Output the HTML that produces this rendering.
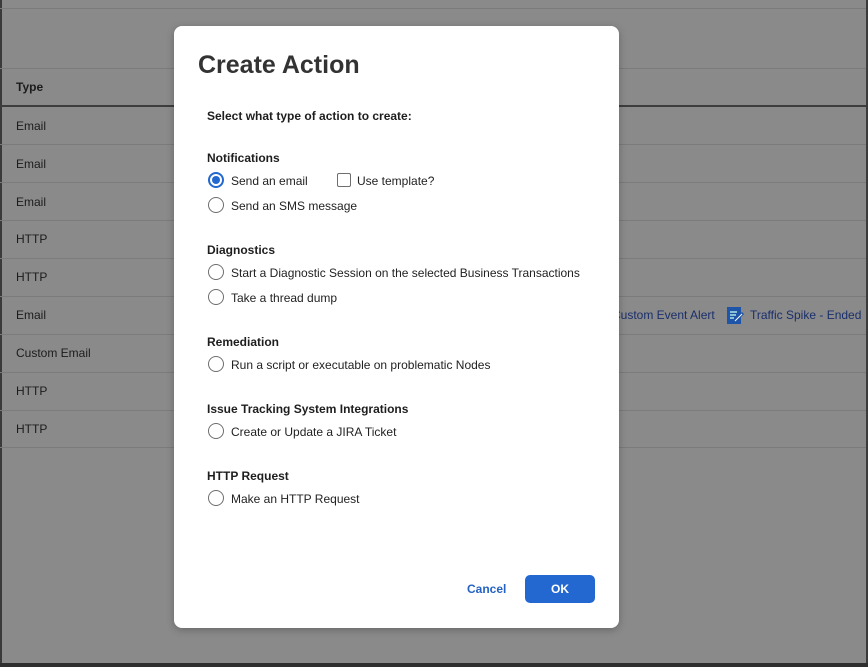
<!DOCTYPE html>
<html><head><style>
body{margin:0;width:868px;height:667px;background:#8a8a8a;position:relative;overflow:hidden;font-family:"Liberation Sans",Arial,sans-serif;}
.bl{position:absolute;left:0;width:866px;height:1px;background:#7b7b7b}
.t{position:absolute;left:16px;font-size:12px;color:#1c1c1c}
.modal{position:absolute;left:174px;top:26px;width:445px;height:602px;background:#fff;border-radius:8px;box-shadow:0 2px 8px rgba(0,0,0,.25)}
.m{position:absolute;font-size:12px;color:#222}
.h{font-weight:bold;color:#1e1e1e}
.r{position:absolute;width:16px;height:16px;border:1.5px solid #6e6e6e;border-radius:50%;box-sizing:border-box}
</style></head><body>
<div style="position:absolute;left:0;top:0;width:2px;height:667px;background:#3a3a3a"></div>
<div style="position:absolute;right:0;top:0;width:2px;height:667px;background:#3a3a3a"></div>
<div style="position:absolute;left:0;bottom:0;width:868px;height:4px;background:#2e2e2e"></div>
<div class="bl" style="top:8px"></div>
<div class="bl" style="top:68px"></div>
<div class="bl" style="top:105px;height:2px;background:#3d3d3d"></div>
<div class="bl" style="top:144px"></div><div class="bl" style="top:182px"></div><div class="bl" style="top:220px"></div><div class="bl" style="top:258px"></div><div class="bl" style="top:296px"></div><div class="bl" style="top:334px"></div><div class="bl" style="top:372px"></div><div class="bl" style="top:410px"></div><div class="bl" style="top:447px"></div>
<div class="t" style="top:80px;font-weight:bold">Type</div>
<div class="t" style="top:119px">Email</div><div class="t" style="top:157px">Email</div><div class="t" style="top:195px">Email</div><div class="t" style="top:232px">HTTP</div><div class="t" style="top:270px">HTTP</div><div class="t" style="top:308px">Email</div><div class="t" style="top:346px">Custom Email</div><div class="t" style="top:384px">HTTP</div><div class="t" style="top:422px">HTTP</div>
<div style="position:absolute;left:612px;top:308px;font-size:12px;color:#1a2f6b">Custom Event Alert</div>
<svg style="position:absolute;left:727px;top:306px" width="18" height="19" viewBox="0 0 18 19"><rect x="0" y="1" width="14" height="17" fill="#1f55a8"/><path d="M3 6h7M3 9h6M3 12h4" stroke="#cfe" stroke-width="1.3"/><path d="M8 15l8-8" stroke="#1f55a8" stroke-width="3"/><path d="M8 15l7-7" stroke="#fff" stroke-width="1"/></svg>
<div style="position:absolute;left:750px;top:308px;font-size:12px;color:#1a2f6b">Traffic Spike - Ended</div>

<div class="modal">
<div class="m" style="left:24px;top:25px;font-size:25px;font-weight:bold;color:#333">Create Action</div>
<div class="m h" style="left:33px;top:83px">Select what type of action to create:</div>
<div class="m h" style="left:33px;top:125px">Notifications</div>
<div class="r" style="left:34px;top:146px;border:2px solid #2368d0"><div style="position:absolute;left:2px;top:2px;width:8px;height:8px;border-radius:50%;background:#2368d0"></div></div>
<div class="m" style="left:57px;top:148px">Send an email</div>
<div style="position:absolute;left:163px;top:147px;width:14px;height:14px;border:1.5px solid #6e6e6e;border-radius:2px;box-sizing:border-box"></div>
<div class="m" style="left:183px;top:148px">Use template?</div>
<div class="r" style="left:34px;top:171px"></div><div class="m" style="left:57px;top:173px">Send an SMS message</div>
<div class="m h" style="left:33px;top:217px">Diagnostics</div>
<div class="r" style="left:34px;top:238px"></div><div class="m" style="left:57px;top:240px">Start a Diagnostic Session on the selected Business Transactions</div>
<div class="r" style="left:34px;top:263px"></div><div class="m" style="left:57px;top:265px">Take a thread dump</div>
<div class="m h" style="left:33px;top:309px">Remediation</div>
<div class="r" style="left:34px;top:330px"></div><div class="m" style="left:57px;top:332px">Run a script or executable on problematic Nodes</div>
<div class="m h" style="left:33px;top:376px">Issue Tracking System Integrations</div>
<div class="r" style="left:34px;top:397px"></div><div class="m" style="left:57px;top:399px">Create or Update a JIRA Ticket</div>
<div class="m h" style="left:33px;top:443px">HTTP Request</div>
<div class="r" style="left:34px;top:464px"></div><div class="m" style="left:57px;top:466px">Make an HTTP Request</div>
<div class="m" style="left:293px;top:556px;font-weight:bold;color:#2462c4">Cancel</div>
<div style="position:absolute;left:351px;top:549px;width:70px;height:28px;background:#2368d0;border-radius:5px;color:#fff;font-size:12px;font-weight:bold;text-align:center;line-height:28px">OK</div>
</div>
</body></html>
